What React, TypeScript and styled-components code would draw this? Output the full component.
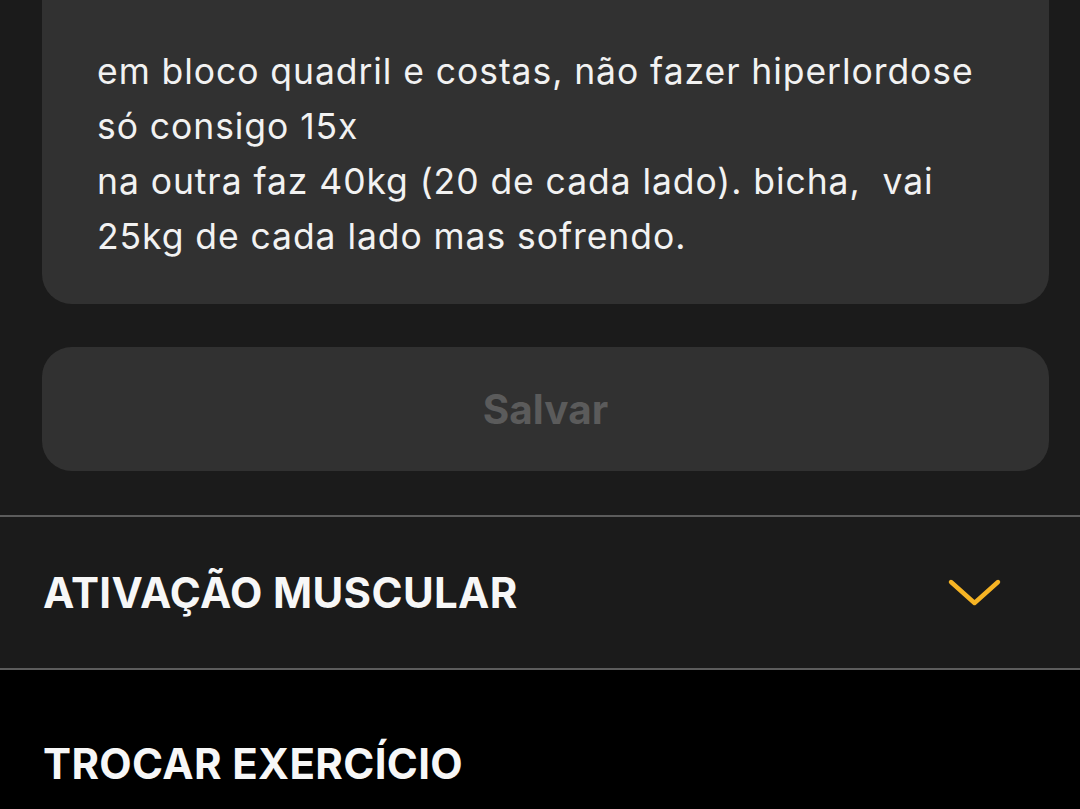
import React from "react";
import styled, { createGlobalStyle } from "styled-components";

const GlobalStyle = createGlobalStyle`
  html, body {
    margin: 0;
    padding: 0;
    background: #1b1b1b;
  }
  body {
    font-family: Inter, "Noto Sans", sans-serif;
    -webkit-font-smoothing: antialiased;
  }
  * { box-sizing: border-box; }
`;

const Screen = styled.div`
  width: 1080px;
  height: 809px;
  overflow: hidden;
  display: flex;
  flex-direction: column;
  background: #1b1b1b;
`;

const Form = styled.div`
  display: flex;
  flex-direction: column;
  gap: 43px;
  padding: 0 31px 44px 42px;
`;

const NoteCard = styled.div`
  background: #313131;
  border-radius: 0 0 30px 30px;
  padding: 44px 20px 40px 55px;
  color: #f2f2f2;
  font-family: Inter, sans-serif;
  font-size: 35.5px;
  line-height: 55px;
  letter-spacing: 0.93px;
  white-space: pre-wrap;
`;

const SaveButton = styled.button`
  height: 124px;
  border: none;
  border-radius: 30px;
  background: #313131;
  color: #5b5b5b;
  font-family: Inter, "Liberation Sans", sans-serif;
  font-weight: 700;
  font-size: 40.5px;
  cursor: default;
`;

const Section = styled.div<{ $dark?: boolean }>`
  display: flex;
  align-items: ${(p) => (p.$dark ? "flex-start" : "center")};
  justify-content: space-between;
  height: ${(p) => (p.$dark ? "auto" : "153px")};
  flex: ${(p) => (p.$dark ? "1" : "none")};
  padding: ${(p) => (p.$dark ? "71px 78px 0 43px" : "0 78px 0 43px")};
  background: ${(p) => (p.$dark ? "#000" : "#1b1b1b")};
  border-top: 2px solid #5c5c5c;
`;

const SectionTitle = styled.span`
  color: #f7f7f7;
  font-family: Inter, "Liberation Sans", sans-serif;
  font-weight: 700;
  font-size: 42px;
  line-height: 46px;
  letter-spacing: 0.35px;
`;

const Chevron = () => (
  <svg width="55" height="29" viewBox="0 0 55 29" fill="none">
    <polyline
      points="4,4 27.5,25 51,4"
      stroke="#f6b424"
      strokeWidth="4.4"
      strokeLinecap="round"
      strokeLinejoin="round"
    />
  </svg>
);

export default function App() {
  return (
    <Screen>
      <GlobalStyle />
      <Form>
        <NoteCard>
          {"em bloco quadril e costas, não fazer hiperlordose\nsó consigo 15x\nna outra faz 40kg (20 de cada lado). bicha,  vai\n25kg de cada lado mas sofrendo."}
        </NoteCard>
        <SaveButton type="button">Salvar</SaveButton>
      </Form>
      <Section>
        <SectionTitle>ATIVAÇÃO MUSCULAR</SectionTitle>
        <Chevron />
      </Section>
      <Section $dark>
        <SectionTitle>TROCAR EXERCÍCIO</SectionTitle>
      </Section>
    </Screen>
  );
}
